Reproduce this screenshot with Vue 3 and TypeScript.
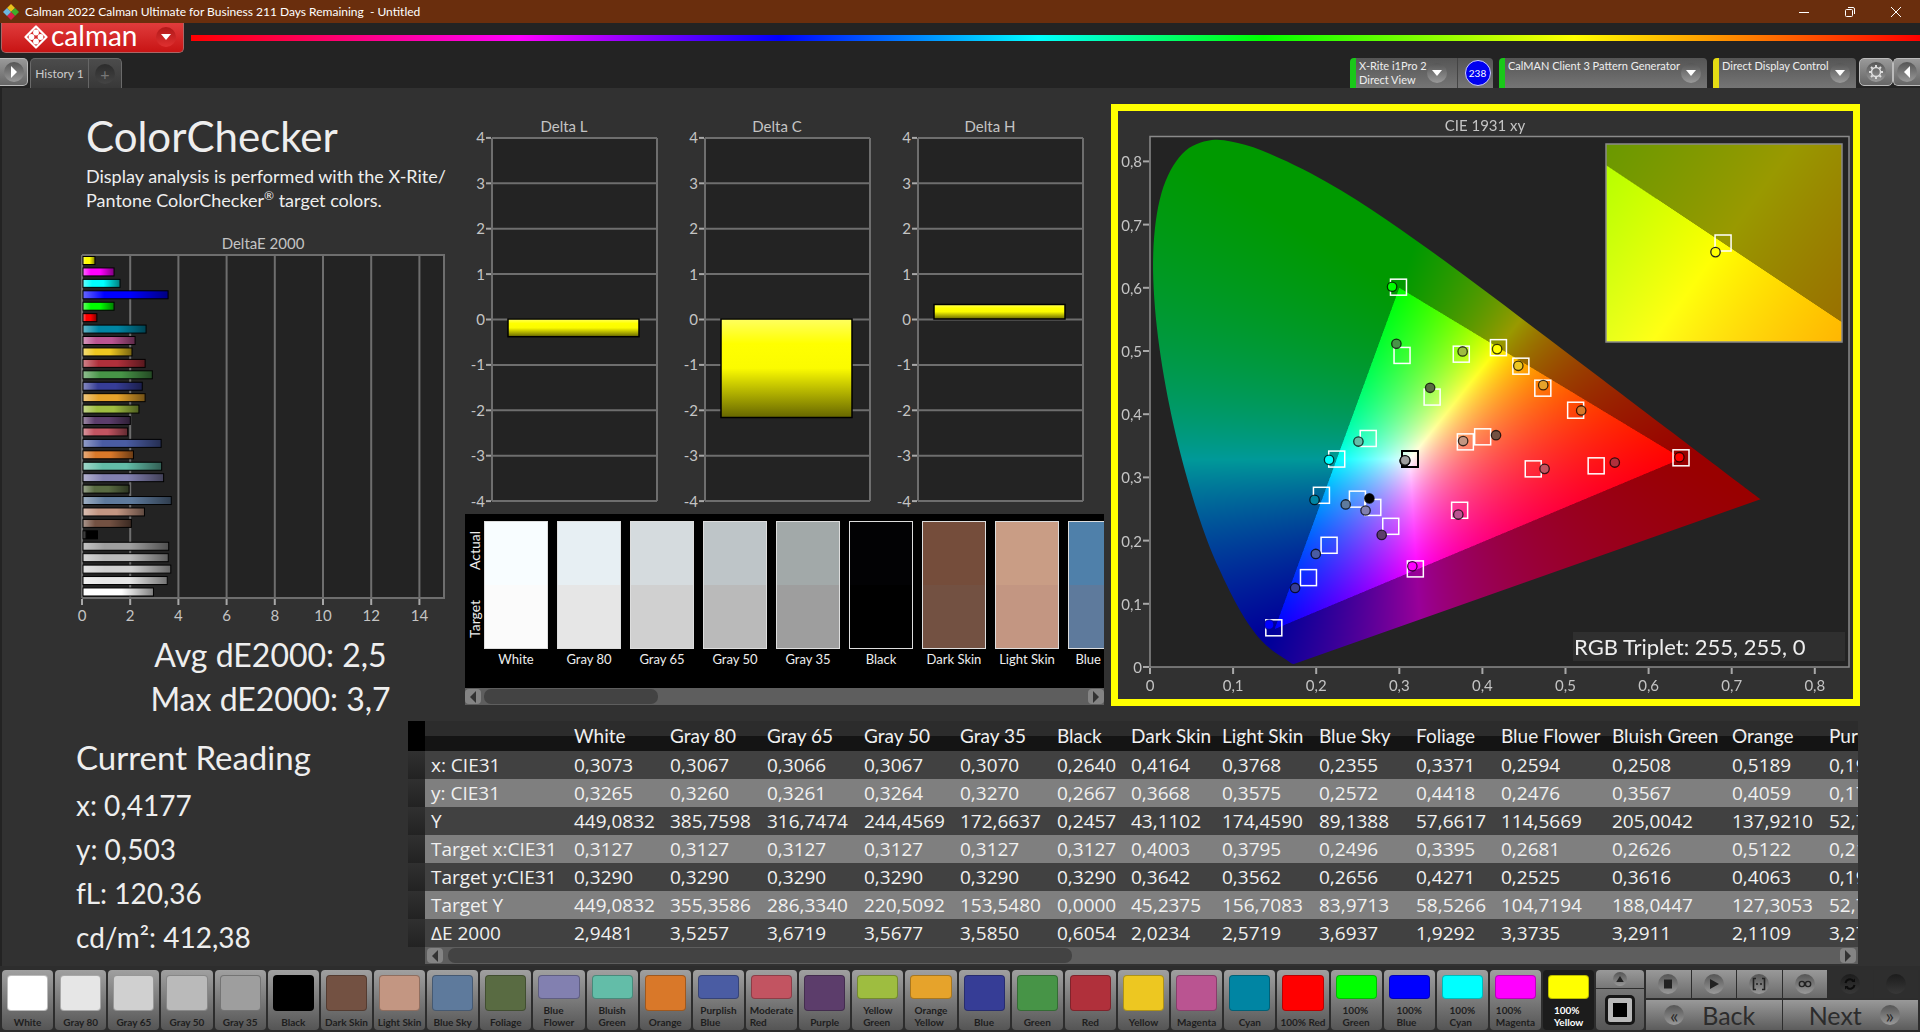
<script setup lang="ts">
import { onMounted, ref } from 'vue'

interface Patch {
  name: string
  color: string
  dE: number
  target: [number, number]
  actual: [number, number]
  split?: [string, string]
}

const patches: Patch[] = [
  { name: 'White', color: '#ffffff', dE: 2.9481, target: [0.3127, 0.329], actual: [0.3073, 0.3265] },
  { name: 'Gray 80', color: '#e6e6e6', dE: 3.5257, target: [0.3127, 0.329], actual: [0.3067, 0.326] },
  { name: 'Gray 65', color: '#d0d0d0', dE: 3.6719, target: [0.3127, 0.329], actual: [0.3066, 0.3261] },
  { name: 'Gray 50', color: '#bababa', dE: 3.5677, target: [0.3127, 0.329], actual: [0.3067, 0.3264] },
  { name: 'Gray 35', color: '#9e9e9e', dE: 3.585, target: [0.3127, 0.329], actual: [0.307, 0.327] },
  { name: 'Black', color: '#000000', dE: 0.6054, target: [0.3127, 0.329], actual: [0.264, 0.2667] },
  { name: 'Dark Skin', color: '#735142', dE: 2.0234, target: [0.4003, 0.3642], actual: [0.4164, 0.3668] },
  { name: 'Light Skin', color: '#c39682', dE: 2.5719, target: [0.3795, 0.3562], actual: [0.3768, 0.3575] },
  { name: 'Blue Sky', color: '#5e7a9c', dE: 3.6937, target: [0.2496, 0.2656], actual: [0.2355, 0.2572] },
  { name: 'Foliage', color: '#596b42', dE: 1.9292, target: [0.3395, 0.4271], actual: [0.3371, 0.4418] },
  { name: 'Blue Flower', color: '#8280b0', dE: 3.3735, target: [0.2681, 0.2525], actual: [0.2594, 0.2476], split: ['Blue', 'Flower'] },
  { name: 'Bluish Green', color: '#63bda8', dE: 3.2911, target: [0.2626, 0.3616], actual: [0.2508, 0.3567], split: ['Bluish', 'Green'] },
  { name: 'Orange', color: '#d97829', dE: 2.1109, target: [0.5122, 0.4063], actual: [0.5189, 0.4059] },
  { name: 'Purplish Blue', color: '#4a5ca3', dE: 3.27, target: [0.2155, 0.1926], actual: [0.1995, 0.1789], split: ['Purplish', 'Blue'] },
  { name: 'Moderate Red', color: '#c25461', dE: 1.87, target: [0.4612, 0.3135], actual: [0.4748, 0.3135], split: ['Moderate', 'Red'] },
  { name: 'Purple', color: '#5c3d6b', dE: 1.98, target: [0.2897, 0.2226], actual: [0.2788, 0.209] },
  { name: 'Yellow Green', color: '#9ebd40', dE: 2.34, target: [0.3746, 0.495], actual: [0.3762, 0.4993], split: ['Yellow', 'Green'] },
  { name: 'Orange Yellow', color: '#e6a32b', dE: 2.6, target: [0.4727, 0.4412], actual: [0.4732, 0.446], split: ['Orange', 'Yellow'] },
  { name: 'Blue', color: '#363d96', dE: 2.48, target: [0.1907, 0.1414], actual: [0.1746, 0.1251] },
  { name: 'Green', color: '#479447', dE: 2.9, target: [0.3033, 0.493], actual: [0.2965, 0.5115] },
  { name: 'Red', color: '#b0303b', dE: 2.6, target: [0.5369, 0.3183], actual: [0.5593, 0.3235] },
  { name: 'Yellow', color: '#edc721', dE: 2.05, target: [0.4463, 0.476], actual: [0.4432, 0.4766] },
  { name: 'Magenta', color: '#ba5491', dE: 2.18, target: [0.3726, 0.248], actual: [0.371, 0.2412] },
  { name: 'Cyan', color: '#0085a3', dE: 2.64, target: [0.2063, 0.2717], actual: [0.198, 0.2644] },
  { name: '100% Red', color: '#ff0000', dE: 0.58, target: [0.639, 0.331], actual: [0.637, 0.332] },
  { name: '100% Green', color: '#00ff00', dE: 1.3, target: [0.299, 0.601], actual: [0.2913, 0.6017], split: ['100%', 'Green'] },
  { name: '100% Blue', color: '#0000ff', dE: 3.56, target: [0.149, 0.062], actual: [0.1434, 0.067], split: ['100%', 'Blue'] },
  { name: '100% Cyan', color: '#00ffff', dE: 1.55, target: [0.2247, 0.329], actual: [0.2155, 0.3278], split: ['100%', 'Cyan'] },
  { name: '100% Magenta', color: '#ff00ff', dE: 1.3, target: [0.3193, 0.1552], actual: [0.3157, 0.1593], split: ['100%', 'Magenta'] },
  { name: '100% Yellow', color: '#ffff00', dE: 0.5, target: [0.4193, 0.5053], actual: [0.4177, 0.503], split: ['100%', 'Yellow'] },
]

const bars = [...patches].reverse()
const deTicks = [0, 2, 4, 6, 8, 10, 12, 14]

const deltas = [
  { title: 'Delta L', value: -0.39 },
  { title: 'Delta C', value: -2.17 },
  { title: 'Delta H', value: 0.32 },
]
const deltaTicks = [4, 3, 2, 1, 0, -1, -2, -3, -4]

const comparisons = [
  { name: 'White', actual: '#f8fdff', target: '#fbfbfb' },
  { name: 'Gray 80', actual: '#e7eff3', target: '#e6e6e6' },
  { name: 'Gray 65', actual: '#d5dbde', target: '#d0d0d0' },
  { name: 'Gray 50', actual: '#bec5c8', target: '#bababa' },
  { name: 'Gray 35', actual: '#a2a9a9', target: '#9e9e9e' },
  { name: 'Black', actual: '#020204', target: '#000000' },
  { name: 'Dark Skin', actual: '#754d3b', target: '#735142' },
  { name: 'Light Skin', actual: '#c99d85', target: '#c39682' },
  { name: 'Blue Sky', actual: '#4f80aa', target: '#5e7a9c' },
]

const columns = [
  { name: 'White', width: 96 },
  { name: 'Gray 80', width: 97 },
  { name: 'Gray 65', width: 97 },
  { name: 'Gray 50', width: 96 },
  { name: 'Gray 35', width: 97 },
  { name: 'Black', width: 74 },
  { name: 'Dark Skin', width: 91 },
  { name: 'Light Skin', width: 97 },
  { name: 'Blue Sky', width: 97 },
  { name: 'Foliage', width: 85 },
  { name: 'Blue Flower', width: 111 },
  { name: 'Bluish Green', width: 120 },
  { name: 'Orange', width: 97 },
  { name: 'Purplish Blue', width: 121 },
]

const rows: { label: string; values: string[] }[] = [
  { label: 'x: CIE31', values: ['0,3073', '0,3067', '0,3066', '0,3067', '0,3070', '0,2640', '0,4164', '0,3768', '0,2355', '0,3371', '0,2594', '0,2508', '0,5189', '0,1995'] },
  { label: 'y: CIE31', values: ['0,3265', '0,3260', '0,3261', '0,3264', '0,3270', '0,2667', '0,3668', '0,3575', '0,2572', '0,4418', '0,2476', '0,3567', '0,4059', '0,1789'] },
  { label: 'Y', values: ['449,0832', '385,7598', '316,7474', '244,4569', '172,6637', '0,2457', '43,1102', '174,4590', '89,1388', '57,6617', '114,5669', '205,0042', '137,9210', '52,7318'] },
  { label: 'Target x:CIE31', values: ['0,3127', '0,3127', '0,3127', '0,3127', '0,3127', '0,3127', '0,4003', '0,3795', '0,2496', '0,3395', '0,2681', '0,2626', '0,5122', '0,2155'] },
  { label: 'Target y:CIE31', values: ['0,3290', '0,3290', '0,3290', '0,3290', '0,3290', '0,3290', '0,3642', '0,3562', '0,2656', '0,4271', '0,2525', '0,3616', '0,4063', '0,1926'] },
  { label: 'Target Y', values: ['449,0832', '355,3586', '286,3340', '220,5092', '153,5480', '0,0000', '45,2375', '156,7083', '83,9713', '58,5266', '104,7194', '188,0447', '127,3053', '52,7104'] },
  { label: 'ΔE 2000', values: ['2,9481', '3,5257', '3,6719', '3,5677', '3,5850', '0,6054', '2,0234', '2,5719', '3,6937', '1,9292', '3,3735', '3,2911', '2,1109', '3,2702'] },
]

const readings = ['x: 0,4177', 'y: 0,503', 'fL: 120,36', 'cd/m²: 412,38']

/* Chromaticity plot geometry, in viewBox units */
const W = 735
const H = 588
const px = (x: number): number => 32 + x * 831
const py = (y: number): number => 556 - y * 632
const inset = { x: 488, y: 33, w: 236, h: 198, cx: 0.4195, cy: 0.5053, span: 0.05 }
const insetX = (x: number): number => inset.x + inset.w / 2 + ((x - inset.cx) / inset.span) * inset.w
const insetY = (y: number): number => inset.y + inset.h / 2 - ((y - inset.cy) / inset.span) * inset.h
const cieTicks = [0, 1, 2, 3, 4, 5, 6, 7, 8]
const tickLabel = (t: number): string => (t === 0 ? '0' : `0,${t}`)

const locus: [number, number][] = [
  [0.1741, 0.005], [0.1733, 0.0048], [0.1714, 0.0051], [0.1689, 0.0069], [0.1644, 0.0109], [0.1566, 0.0177],
  [0.151, 0.0227], [0.144, 0.0297], [0.1355, 0.0399], [0.1241, 0.0578], [0.1096, 0.0868], [0.0913, 0.1327],
  [0.0687, 0.2007], [0.0454, 0.295], [0.0235, 0.4127], [0.0082, 0.5384], [0.0039, 0.6548], [0.0139, 0.7502],
  [0.0389, 0.812], [0.0743, 0.8338], [0.1142, 0.8262], [0.1547, 0.8059], [0.1929, 0.7816], [0.2296, 0.7543],
  [0.2658, 0.7243], [0.3016, 0.6923], [0.3373, 0.6589], [0.3731, 0.6245], [0.4087, 0.5896], [0.4441, 0.5547],
  [0.4788, 0.5202], [0.5125, 0.4866], [0.5448, 0.4544], [0.5752, 0.4242], [0.6029, 0.3965], [0.627, 0.3725],
  [0.6482, 0.3514], [0.6658, 0.334], [0.6801, 0.3197], [0.6915, 0.3083], [0.7079, 0.292], [0.719, 0.2809],
  [0.7347, 0.2653],
]

/* Colour of a chromaticity; darker outside the Rec.709 triangle */
function shade(x: number, y: number): [number, number, number] {
  const yy = Math.max(y, 0.0001)
  const X = x / yy
  const Z = (1 - x - yy) / yy
  const rgb = [
    3.2406 * X - 1.5372 - 0.4986 * Z,
    -0.9689 * X + 1.8758 + 0.0415 * Z,
    0.0557 * X - 0.204 + 1.057 * Z,
  ]
  const level = Math.min(...rgb) < 0 ? 153 : 255
  const top = Math.max(...rgb)
  const [r, g, b] = rgb.map((v) => (Math.max(v, 0) / top) * level)
  return [r, g, b]
}

function paint(ctx: CanvasRenderingContext2D, x0: number, y0: number, w: number, h: number, toX: (i: number) => number, toY: (j: number) => number): void {
  const data = ctx.createImageData(w, h)
  const offsets = [0.25, 0.75]
  for (let j = 0; j < h; j++) {
    for (let i = 0; i < w; i++) {
      const sum = [0, 0, 0]
      for (const a of offsets) {
        for (const b of offsets) {
          const c = shade(toX(x0 + i + a), toY(y0 + j + b))
          c.forEach((v, k) => (sum[k] += v / 4))
        }
      }
      data.data.set([sum[0], sum[1], sum[2], 255], (j * w + i) * 4)
    }
  }
  const layer = document.createElement('canvas')
  layer.width = w
  layer.height = h
  layer.getContext('2d')?.putImageData(data, 0, 0)
  ctx.drawImage(layer, x0, y0)
}

const gamut = ref<HTMLCanvasElement | null>(null)

onMounted(() => {
  const ctx = gamut.value?.getContext('2d')
  if (!ctx) return
  ctx.fillStyle = '#232323'
  ctx.fillRect(32, 26, 699, 530)
  ctx.save()
  ctx.beginPath()
  /* Catmull-Rom curve through the locus points */
  const pts = locus.map(([x, y]) => [px(x), py(y)])
  ctx.moveTo(pts[0][0], pts[0][1])
  for (let i = 0; i < pts.length - 1; i++) {
    const p0 = pts[Math.max(i - 1, 0)]
    const p1 = pts[i]
    const p2 = pts[i + 1]
    const p3 = pts[Math.min(i + 2, pts.length - 1)]
    ctx.bezierCurveTo(
      p1[0] + (p2[0] - p0[0]) / 6, p1[1] + (p2[1] - p0[1]) / 6,
      p2[0] - (p3[0] - p1[0]) / 6, p2[1] - (p3[1] - p1[1]) / 6,
      p2[0], p2[1],
    )
  }
  ctx.closePath()
  ctx.clip()
  paint(ctx, 32, 26, 699, 530, (i) => (i - 32) / 831, (j) => (556 - j) / 632)
  ctx.restore()
  paint(
    ctx, inset.x, inset.y, inset.w, inset.h,
    (i) => inset.cx + ((i - inset.x) / inset.w - 0.5) * inset.span,
    (j) => inset.cy - ((j - inset.y) / inset.h - 0.5) * inset.span,
  )
})
</script>

<template>
  <div class="app">
    <header class="titlebar">
      <svg class="app-icon" viewBox="0 0 18 18" aria-hidden="true">
        <path d="M9 1 L13 5 L9 9 L5 5Z" fill="#e8c21c" />
        <path d="M13 5 L17 9 L13 13 L9 9Z" fill="#3fae2a" />
        <path d="M9 9 L13 13 L9 17 L5 13Z" fill="#d81f4a" />
        <path d="M5 5 L9 9 L5 13 L1 9Z" fill="#6db6e0" />
      </svg>
      <span class="window-title">Calman 2022 Calman Ultimate for Business 211 Days Remaining&nbsp; - Untitled</span>
      <div class="window-controls">
        <button aria-label="Minimize"><svg viewBox="0 0 12 12"><path d="M1 6.5H11" /></svg></button>
        <button aria-label="Restore"><svg viewBox="0 0 12 12"><rect x="1.5" y="3.5" width="7" height="7" rx="1" /><path d="M4 1.5H9Q10.5 1.5 10.5 3V8" /></svg></button>
        <button aria-label="Close"><svg viewBox="0 0 12 12"><path d="M1 1L11 11M11 1L1 11" /></svg></button>
      </div>
    </header>

    <div class="ribbon">
      <button class="brand">
        <svg class="brand-mark" viewBox="0 0 24 24" aria-hidden="true">
          <path d="M12 1.5 L22.5 12 L12 22.5 L1.5 12Z" fill="none" stroke="#fff" stroke-width="2.2" stroke-linejoin="round" />
          <g fill="#fff">
            <circle cx="12" cy="7.5" r="2.9" /><circle cx="16.5" cy="12" r="2.9" />
            <circle cx="12" cy="16.5" r="2.9" /><circle cx="7.5" cy="12" r="2.9" />
          </g>
        </svg>
        <span class="brand-name">calman</span>
        <span class="brand-caret"><svg viewBox="0 0 10 6"><path d="M0 0H10L5 6Z" fill="#fff" /></svg></span>
      </button>
      <div class="rainbow"></div>
    </div>

    <nav class="tabs">
      <button class="square-btn first" aria-label="Expand"><span class="round"><svg viewBox="0 0 10 12"><path d="M2 0L8 6L2 12Z" fill="#fff" /></svg></span></button>
      <div class="history">
        <button class="history-tab">History 1</button>
        <button class="history-add" aria-label="Add"><span class="round dim">+</span></button>
      </div>
      <div class="spacer"></div>
      <div class="device meter">
        <button class="device-btn"><span>X-Rite i1Pro 2<br>Direct View</span><span class="round caret"><svg viewBox="0 0 10 6"><path d="M0 0H10L5 6Z" fill="#fff" /></svg></span></button>
        <span class="badge-cell"><span class="badge">238</span></span>
      </div>
      <div class="device generator">
        <button class="device-btn"><span>CalMAN Client 3 Pattern Generator</span><span class="round caret"><svg viewBox="0 0 10 6"><path d="M0 0H10L5 6Z" fill="#fff" /></svg></span></button>
      </div>
      <div class="device control">
        <button class="device-btn"><span>Direct Display Control</span><span class="round caret"><svg viewBox="0 0 10 6"><path d="M0 0H10L5 6Z" fill="#fff" /></svg></span></button>
      </div>
      <button class="square-btn" aria-label="Settings">
        <span class="round"><svg class="gear" viewBox="0 0 16 16" fill="none" stroke="#ddd"><circle cx="8" cy="8" r="4.5" stroke-width="1.5" /><path d="M8 1V3M8 13V15M1 8H3M13 8H15M3 3L4.5 4.5M11.5 11.5L13 13M3 13L4.5 11.5M11.5 4.5L13 3" stroke-width="2" /></svg></span>
      </button>
      <button class="square-btn last" aria-label="Collapse"><span class="round"><svg viewBox="0 0 10 12"><path d="M8 0L2 6L8 12Z" fill="#fff" /></svg></span></button>
    </nav>

    <main class="workspace">
      <section class="top">
        <div class="summary">
          <h1>ColorChecker</h1>
          <p class="intro">Display analysis is performed with the X-Rite/<br>Pantone ColorChecker<sup>®</sup> target colors.</p>
          <svg class="chart" viewBox="0 0 465 401" role="img" aria-label="DeltaE 2000">
            <defs>
              <linearGradient id="tube" x1="0" x2="1" y1="0" y2="0">
                <stop offset="0" stop-color="#fff" stop-opacity="0.4" />
                <stop offset="0.25" stop-color="#fff" stop-opacity="0" />
                <stop offset="0.55" stop-color="#000" stop-opacity="0" />
                <stop offset="1" stop-color="#000" stop-opacity="0.5" />
              </linearGradient>
            </defs>
            <text x="263" y="17" class="chart-title" text-anchor="middle">DeltaE 2000</text>
            <rect x="82" y="23" width="362" height="343" fill="#232323" />
            <g class="grid">
              <path v-for="t in deTicks" :key="t" :d="`M${82 + t * 24.1} 23V366`" />
              <path d="M82 23H444V366H82" />
              <path v-for="t in deTicks" :key="`m${t}`" class="notch" :d="`M${82 + t * 24.1} 367V373`" />
            </g>
            <g v-for="(b, i) in bars" :key="b.name">
              <rect x="83" :y="24.5 + i * 11.43" :width="b.dE * 23.9" height="8" :fill="b.color" />
              <rect x="83" :y="24.5 + i * 11.43" :width="b.dE * 23.9" height="8" fill="url(#tube)" stroke="#000" />
            </g>
            <text v-for="t in deTicks" :key="t" :x="82 + t * 24.1" y="389" class="tick" text-anchor="middle">{{ t }}</text>
          </svg>
          <p class="stat">Avg dE2000: 2,5</p>
          <p class="stat">Max dE2000: 3,7</p>
        </div>

        <div class="middle">
          <div class="deltas">
            <svg v-for="d in deltas" :key="d.title" class="chart" viewBox="0 0 213 402" role="img" :aria-label="d.title">
              <defs>
                <linearGradient id="gloss" x1="0" x2="0" y1="0" y2="1">
                  <stop offset="0" stop-color="#ffff60" />
                  <stop offset="0.25" stop-color="#ffff00" />
                  <stop offset="0.5" stop-color="#fbfb00" />
                  <stop offset="1" stop-color="#666600" />
                </linearGradient>
              </defs>
              <text x="99" y="20" class="chart-title" text-anchor="middle">{{ d.title }}</text>
              <rect x="27" y="26" width="165" height="363" fill="#232323" />
              <g class="grid">
                <path v-for="t in deltaTicks" :key="t" :d="`M27 ${207.5 - t * 45.4}H192`" />
                <path d="M27 26V389M192 26V389" />
                <path v-for="t in deltaTicks" :key="`m${t}`" class="notch" :d="`M21 ${207.5 - t * 45.4}H26`" />
              </g>
              <rect x="43" :y="d.value > 0 ? 207 - d.value * 45.4 : 207" width="131" :height="Math.abs(d.value) * 45.4" fill="url(#gloss)" stroke="#000" stroke-width="1.5" />
              <text v-for="t in deltaTicks" :key="t" x="20" :y="213 - t * 45.4" class="tick" text-anchor="end">{{ t }}</text>
            </svg>
          </div>
          <div class="compare">
            <div class="compare-view">
              <div class="side"><span class="side-actual">Actual</span><span class="side-target">Target</span></div>
              <div v-for="c in comparisons" :key="c.name" class="pair">
                <div class="pair-box">
                  <div :style="{ background: c.actual }"></div>
                  <div :style="{ background: c.target }"></div>
                </div>
                <span>{{ c.name }}</span>
              </div>
            </div>
            <div class="scroll">
              <button class="arrow" aria-label="Scroll left"><svg viewBox="0 0 8 12"><path d="M7 0V12L1 6Z" /></svg></button>
              <div class="track"><div class="thumb short"></div></div>
              <button class="arrow" aria-label="Scroll right"><svg viewBox="0 0 8 12"><path d="M1 0V12L7 6Z" /></svg></button>
            </div>
          </div>
        </div>

        <div class="cie">
          <canvas ref="gamut" :width="W" :height="H"></canvas>
          <svg :viewBox="`0 0 ${W} ${H}`" role="img" aria-label="CIE 1931 xy">
            <text x="367" y="20" class="chart-title" text-anchor="middle">CIE 1931 xy</text>
            <rect x="32" y="25.5" width="699" height="530.5" fill="none" stroke="#8a8a8a" stroke-width="1.5" />
            <g class="grid">
              <path v-for="t in cieTicks" :key="`x${t}`" class="notch" :d="`M${px(t / 10)} 557V563`" />
              <path v-for="t in cieTicks" :key="`y${t}`" class="notch" :d="`M25 ${py(t / 10)}H31`" />
            </g>
            <text v-for="t in cieTicks" :key="`tx${t}`" :x="px(t / 10)" y="580" class="tick" text-anchor="middle">{{ tickLabel(t) }}</text>
            <text v-for="t in cieTicks" :key="`ty${t}`" x="24" :y="py(t / 10) + 6" class="tick" text-anchor="end">{{ tickLabel(t) }}</text>
            <rect v-for="p in patches" :key="`t${p.name}`" :x="px(p.target[0]) - 8" :y="py(p.target[1]) - 8" width="16" height="16" fill="none" :stroke="p.target[0] === 0.3127 ? '#000' : '#fff'" stroke-width="1.5" />
            <circle v-for="p in patches" :key="`a${p.name}`" :cx="px(p.actual[0])" :cy="py(p.actual[1])" r="4.7" :fill="p.color" :stroke="p.name === '100% Blue' ? '#000090' : '#000'" stroke-opacity="0.75" stroke-width="1.3" />
            <rect :x="inset.x" :y="inset.y" :width="inset.w" :height="inset.h" fill="none" stroke="#8a8a8a" stroke-width="1.5" />
            <rect :x="insetX(0.4193) - 8" :y="insetY(0.5053) - 8" width="16" height="16" fill="none" stroke="#fff" stroke-width="1.5" />
            <circle :cx="insetX(0.4177)" :cy="insetY(0.503)" r="4.7" fill="#ff0" stroke="#222" stroke-width="1.3" />
            <rect x="455" y="521" width="272" height="29" fill="#2f2f2f" />
            <text x="456" y="544" class="triplet">RGB Triplet: 255, 255, 0</text>
          </svg>
        </div>
      </section>

      <section class="bottom">
        <div class="reading">
          <h2>Current Reading</h2>
          <p v-for="r in readings" :key="r">{{ r }}</p>
        </div>
        <div class="data">
          <table>
            <colgroup>
              <col class="c-mark"><col class="c-label">
              <col v-for="c in columns" :key="c.name" :style="{ width: `${c.width}px` }">
            </colgroup>
            <thead>
              <tr>
                <td class="mark"></td>
                <td></td>
                <th v-for="c in columns" :key="c.name" scope="col">{{ c.name }}</th>
              </tr>
            </thead>
            <tbody>
              <tr v-for="r in rows" :key="r.label">
                <td class="mark"></td>
                <th scope="row">{{ r.label }}</th>
                <td v-for="(v, i) in r.values" :key="i">{{ v }}</td>
              </tr>
            </tbody>
          </table>
          <div class="scroll wide">
            <button class="arrow" aria-label="Scroll left"><svg viewBox="0 0 8 12"><path d="M7 0V12L1 6Z" /></svg></button>
            <div class="track"><div class="thumb long"></div></div>
            <button class="arrow" aria-label="Scroll right"><svg viewBox="0 0 8 12"><path d="M1 0V12L7 6Z" /></svg></button>
          </div>
        </div>
      </section>
    </main>

    <footer class="dock">
      <div class="patches">
        <button v-for="p in patches" :key="p.name" class="patch" :class="{ active: p.name === '100% Yellow' }">
          <span class="chip" :style="{ background: p.color }"></span>
          <span class="patch-name">
            <template v-if="p.split">{{ p.split[0] }}<br>{{ p.split[1] }}</template>
            <template v-else>{{ p.name }}</template>
          </span>
        </button>
      </div>
      <div class="window-pick">
        <button class="pick-up" aria-label="More"><span class="round small"><svg viewBox="0 0 10 8"><path d="M0 8H10L5 0Z" fill="#222" /></svg></span></button>
        <button class="pick-box" aria-label="Window size">
          <svg viewBox="0 0 32 32"><rect x="1" y="1" width="30" height="30" rx="5" fill="#161616" /><rect x="4" y="4" width="24" height="24" rx="2" fill="#b8b8b8" /><rect x="9" y="9" width="14" height="14" fill="#000" /></svg>
        </button>
      </div>
      <div class="transport">
        <div class="tools">
          <button aria-label="Stop"><span class="round"><svg viewBox="0 0 14 14"><rect x="3" y="2.5" width="8" height="9" fill="#222" /></svg></span></button>
          <button aria-label="Play"><span class="round"><svg viewBox="0 0 14 14"><path d="M3 2L12 7L3 12Z" fill="#222" /></svg></span></button>
          <button aria-label="Read series"><span class="round"><svg viewBox="0 0 14 14" fill="none" stroke="#222" stroke-width="1.6"><path d="M4 1.5H1.5V12.5H4M10 1.5H12.5V12.5H10M4 7H6M8 7H10" /></svg></span></button>
          <button aria-label="Read continuous"><span class="round"><svg viewBox="0 0 16 14" fill="none" stroke="#222" stroke-width="1.6"><circle cx="4.5" cy="7" r="3" /><circle cx="11.5" cy="7" r="3" /></svg></span></button>
          <button class="off" aria-label="Refresh"><span class="round"><svg viewBox="0 0 14 14" fill="none" stroke="#0c0c0c" stroke-width="2"><path d="M2.5 6A4.5 4.5 0 0 1 10 3.5M11.5 8A4.5 4.5 0 0 1 4 10.5" /><path d="M8.5 5H12V1.5ZM5.5 9H2V12.5Z" fill="#0c0c0c" stroke="none" /></svg></span></button>
          <button class="off" aria-label="Idle"><span class="round"></span></button>
        </div>
        <div class="steps">
          <button class="back"><span class="round">«</span>Back</button>
          <button class="next">Next<span class="round">»</span></button>
        </div>
      </div>
    </footer>
  </div>
</template>

<style>
body {
  margin: 0;
  background: #232323;
}
</style>

<style scoped>
.app {
  display: flex;
  flex-direction: column;
  min-height: 100vh;
  background: #232323;
  color: #eee;
  font-family: Lato, "Open Sans", sans-serif;
  overflow: hidden;
}
h1, h2, p { margin: 0; font-weight: 400; }
button {
  margin: 0;
  padding: 0;
  border: 0;
  background: none;
  color: inherit;
  font: inherit;
}
svg { display: block; }

.titlebar {
  display: flex;
  align-items: center;
  height: 23px;
  padding-right: 1px;
  background: #6a2e0d;
}
.app-icon { width: 18px; height: 18px; margin: 0 5px 0 2px; }
.window-title {
  flex: 1;
  color: #fff;
  font-size: 12px;
  line-height: 23px;
}
.window-controls { display: flex; }
.window-controls button {
  display: flex;
  align-items: center;
  justify-content: center;
  width: 46px;
  height: 20px;
}
.window-controls svg {
  width: 12px;
  height: 12px;
  fill: none;
  stroke: #fff;
}

.ribbon {
  display: flex;
  align-items: flex-start;
  height: 35px;
  padding-left: 1px;
}
.brand {
  display: flex;
  align-items: center;
  box-sizing: border-box;
  width: 183px;
  height: 30px;
  padding: 0 7px 2px 22px;
  border: 1px solid #a66;
  border-top: 0;
  border-radius: 0 0 5px 5px;
  background: linear-gradient(#e03c3c, #c81414);
}
.brand-mark { width: 24px; height: 24px; }
.brand-name {
  flex: 1;
  padding: 0 0 4px 3px;
  color: #fff;
  font-size: 28px;
  line-height: 24px;
  text-align: left;
}
.brand-caret {
  display: flex;
  align-items: center;
  justify-content: center;
  width: 20px;
  height: 20px;
  border-radius: 10px;
  background: linear-gradient(#b01818, #e03030);
}
.brand-caret svg { width: 10px; height: 6px; }
.rainbow {
  flex: 1;
  height: 6px;
  margin: 12px 0 0 7px;
  background: linear-gradient(90deg, #f00, #f0f 19%, #00f 34%, #0ff 49%, #0f0 62%, #ff0 80%, #f00);
}

.tabs {
  display: flex;
  height: 30px;
}
.spacer { flex: 1; }
.square-btn {
  display: flex;
  align-items: center;
  justify-content: center;
  box-sizing: border-box;
  width: 34px;
  height: 28px;
  border: 1px solid #bbb;
  border-radius: 5px;
  background: linear-gradient(#999, #666);
}
.square-btn.first {
  width: 28px;
  margin-right: 2px;
  border-left: 0;
  border-radius: 0 5px 5px 0;
}
.square-btn.last {
  width: 27px;
  border-right: 0;
  border-radius: 5px 0 0 5px;
}
.square-btn svg { width: 10px; height: 12px; }
.square-btn .gear { width: 16px; height: 16px; }
.round {
  display: flex;
  align-items: center;
  justify-content: center;
  width: 20px;
  height: 20px;
  border-radius: 10px;
  background: linear-gradient(#555, #999);
}
.round.dim {
  background: linear-gradient(#2c2c2c, #444);
  color: #777;
  font-size: 16px;
  line-height: 20px;
}
.history {
  display: flex;
  box-sizing: border-box;
  border: 1px solid #6a6a6a;
  border-bottom: 0;
  border-radius: 5px 5px 0 0;
  background: linear-gradient(#4c4c4c, #383838);
}
.history-tab {
  width: 58px;
  border-right: 1px solid #666;
  color: #ccc;
  font-size: 12px;
}
.history-add {
  display: flex;
  align-items: center;
  justify-content: center;
  width: 32px;
}
.device {
  display: flex;
  box-sizing: border-box;
  margin-right: 6px;
  border-left: 6px solid #19c819;
  border-radius: 4px 4px 0 0;
  background: linear-gradient(#555, #757575);
}
.device-btn {
  display: flex;
  flex: 1;
  justify-content: space-between;
  padding: 1px 6px 0 3px;
  font-size: 11px;
  line-height: 14px;
  text-align: left;
  white-space: nowrap;
}
.meter { width: 143px; }
.meter .device-btn { padding-right: 10px; }
.generator { width: 208px; }
.control { width: 143px; margin-right: 3px; border-left-color: #e6dc14; }
.caret { flex: none; margin-top: 4px; }
.caret svg { width: 10px; height: 6px; }
.control .caret, .generator .caret { margin-left: -4px; }
.badge-cell {
  display: flex;
  align-items: center;
  justify-content: center;
  box-sizing: border-box;
  width: 36px;
  padding-left: 4px;
  border-left: 1px solid #444;
}
.badge {
  width: 24px;
  height: 24px;
  border: 1px solid #ccf;
  border-radius: 13px;
  background: #0000f0;
  color: #fff;
  font-size: 10px;
  line-height: 24px;
  text-align: center;
}

.workspace {
  flex: 1;
  border-left: 2px solid #232323;
  background: #313131;
}
.top {
  display: grid;
  grid-template-columns: 463fr 639fr 7px 749fr 60fr;
  align-items: start;
}
.top > * { min-width: 0; }
.chart { width: 100%; }
.chart-title, .tick { fill: #c4c4c4; font-size: 15px; }
.grid path {
  fill: none;
  stroke: #6e6e6e;
  stroke-width: 2px;
}
.grid .notch { stroke: #a8a8a8; }

.summary { padding-top: 20px; margin-left: -2px; }
.summary h1 {
  padding-left: 86px;
  font-size: 42px;
  line-height: 56px;
}
.intro {
  padding-left: 86px;
  margin-bottom: 20px;
  font-size: 18px;
  line-height: 24px;
  white-space: nowrap;
}
.intro sup { font-size: 12px; line-height: 0; }
.stat {
  padding-left: 76px;
  font-size: 32px;
  line-height: 44px;
  text-align: center;
}

.middle { padding-top: 24px; }
.deltas { display: grid; grid-template-columns: repeat(3, 1fr); }
.compare-view {
  display: flex;
  gap: 9px;
  box-sizing: border-box;
  height: 174px;
  padding: 7px 0 0 1px;
  background: #000;
  overflow: hidden;
}
.side {
  display: flex;
  flex-direction: column;
  width: 18px;
  margin-right: -8px;
}
.side span {
  font-size: 14px;
  line-height: 17px;
  text-align: center;
  writing-mode: vertical-rl;
  rotate: 180deg;
}
.side-actual { height: 58px; }
.side-target { height: 80px; }
.pair {
  display: flex;
  flex-direction: column;
  flex: none;
  width: 64px;
  text-align: center;
}
.pair span {
  font-size: 13px;
  line-height: 20px;
  white-space: nowrap;
}
.pair-box { box-sizing: border-box; border: 1px solid #ddd; }
.pair-box div { height: 63px; }
.scroll {
  display: flex;
  align-items: center;
  height: 17px;
  background: #5e5e5e;
}
.track { flex: 1; padding: 0 3px; }
.thumb {
  height: 15px;
  border-radius: 7px;
  background: #434343;
}
.short { width: 29%; }
.long { width: 45%; }
.arrow {
  display: flex;
  align-items: center;
  justify-content: center;
  width: 16px;
  height: 15px;
  border-radius: 4px;
  background: #848484;
}
.arrow svg { width: 8px; height: 12px; fill: #333; }

.cie {
  grid-column: 4;
  display: grid;
  margin-top: 16px;
  border: 7px solid #ff0;
}
.cie canvas, .cie svg { grid-area: 1 / 1; width: 100%; }
.triplet { fill: #eee; font-size: 22px; }

.bottom { display: flex; }
.reading {
  flex: none;
  box-sizing: border-box;
  width: 406px;
  padding: 14px 0 0 74px;
}
.reading h2 { margin-bottom: 4px; font-size: 33px; line-height: 44px; }
.reading p { font-size: 28px; line-height: 44px; }
.data {
  flex: 1;
  min-width: 0;
  margin-right: 62px;
  overflow: hidden;
}
table {
  width: 1536px;
  border-collapse: collapse;
  table-layout: fixed;
  font: 19px/28px "Open Sans", "Noto Sans", sans-serif;
}
.c-mark { width: 17px; }
.c-label { width: 143px; }
th, td {
  height: 28px;
  padding: 0 0 0 6px;
  color: #f0f0f0;
  font-weight: 400;
  text-align: left;
  white-space: nowrap;
}
thead tr { background: linear-gradient(#2c2c2c 50%, #141414 50%); }
thead td, thead th { height: 30px; }
thead th { font-family: Lato, "Open Sans", sans-serif; }
tbody tr { background: #414141; }
tbody tr:nth-child(even) { background: #7f7f7f; }
.mark, tbody tr:nth-child(even) .mark { background: linear-gradient(#303030, #222); }
thead .mark { background: #000; }
.wide { margin-left: 17px; padding: 0 2px; }
.wide .track { padding: 0 5px; }

.dock {
  display: flex;
  gap: 2px;
  height: 60px;
  padding: 4px 2px 2px;
  background: #2d2d2d;
}
.patches { display: flex; flex: 1; gap: 2px; }
.patch {
  display: flex;
  flex: 1 1 0;
  flex-direction: column;
  align-items: center;
  min-width: 0;
  padding: 5px 0 2px;
  border-radius: 4px;
  background: linear-gradient(#a0a0a0, #555);
  color: #1e1e1e;
  font-size: 10px;
  font-weight: 700;
  line-height: 12px;
  text-align: left;
  white-space: nowrap;
}
.chip {
  flex: 1;
  align-self: stretch;
  margin: 0 5px 5px;
  border: 1px solid #0004;
  border-radius: 4px;
}
.patch.active { background: #1c1c1c; color: #fff; }
.window-pick {
  display: flex;
  flex-direction: column;
  gap: 1px;
  width: 48px;
}
.window-pick button {
  display: flex;
  align-items: center;
  justify-content: center;
  background: linear-gradient(#999, #777);
}
.pick-up { height: 18px; border-radius: 4px 4px 0 0; }
.window-pick .pick-box { flex: 1; border-radius: 0 0 4px 4px; background: linear-gradient(#777, #555); }
.pick-box svg { width: 32px; height: 32px; }
.round.small { width: 14px; height: 14px; }
.small svg { width: 8px; height: 6px; }
.transport { width: 272px; }
.tools, .steps { display: flex; gap: 1px; }
.tools { margin-bottom: 2px; }
.tools button {
  display: flex;
  flex: 1;
  align-items: center;
  justify-content: center;
  height: 28px;
  background: linear-gradient(#999, #6a6a6a);
}
.tools .off { background: #2e2e2e; }
.tools .off .round { background: linear-gradient(#1c1c1c, #383838); }
.tools svg { width: 14px; height: 14px; }
.steps button {
  display: flex;
  flex: 1;
  align-items: center;
  justify-content: center;
  gap: 18px;
  height: 30px;
  background: linear-gradient(#999, #5c5c5c);
  color: #2c2c2c;
  font-size: 25px;
  line-height: 28px;
}
.steps .back { padding-right: 8px; }
.steps .next { padding-left: 8px; }
.steps .round { font-size: 20px; line-height: 16px; }
</style>
